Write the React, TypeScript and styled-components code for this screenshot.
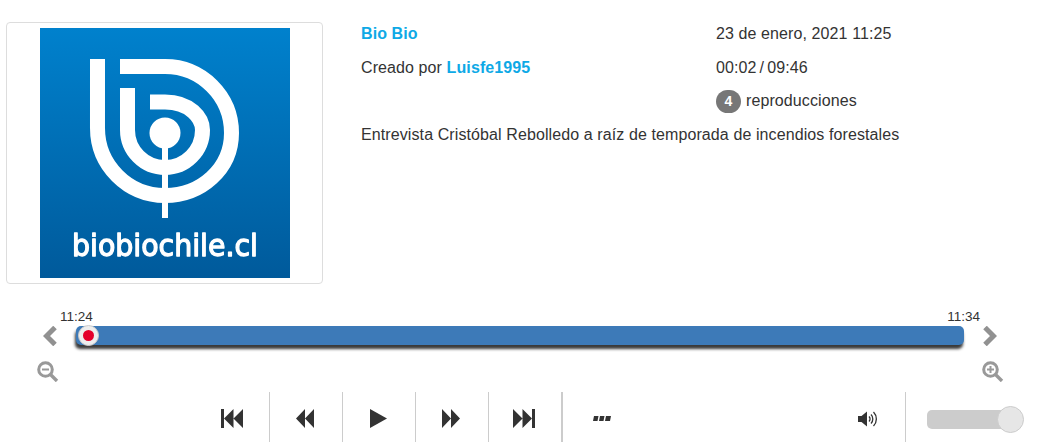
import styled, { createGlobalStyle } from "styled-components";

const GlobalStyle = createGlobalStyle`
  html, body {
    margin: 0;
    height: 442px;
    overflow: hidden;
    background: #fff;
    color: #333;
    font-family: "Liberation Sans", Arial, sans-serif;
    font-size: 16px;
    letter-spacing: 0.1px;
  }
`;

const Page = styled.div`
  width: 1041px;
  height: 442px;
  overflow: hidden;
`;

const TopRow = styled.section`
  display: flex;
  padding: 17px 0 0 6px;
  height: 267px;
`;

const Thumbnail = styled.div`
  box-sizing: border-box;
  flex: none;
  width: 317px;
  height: 262px;
  margin-top: 5px;
  padding: 5px;
  display: flex;
  justify-content: center;
  border: 1px solid #ddd;
  border-radius: 4px;
`;

const Info = styled.div`
  margin-left: 38px;
  width: 640px;
  display: grid;
  grid-template-columns: 355px 1fr;
  grid-auto-rows: 33.7px;
  align-items: center;
  align-content: start;
  line-height: 20px;
`;

const Link = styled.a`
  color: #0ea9e6;
  font-weight: 700;
  text-decoration: none;
`;

const Duration = styled.div`
  word-spacing: -1.5px;
`;

const Description = styled.div`
  grid-column: 1 / 3;
`;

const Badge = styled.span`
  display: inline-block;
  box-sizing: border-box;
  width: 25px;
  height: 23px;
  margin-right: 5px;
  border-radius: 12px;
  background: #777;
  color: #fff;
  font-size: 14px;
  font-weight: 700;
  line-height: 23px;
  text-align: center;
  vertical-align: middle;
`;

const Timeline = styled.section`
  margin-top: 25px;
  height: 83px;
`;

const TimeLabels = styled.div`
  display: flex;
  justify-content: space-between;
  padding: 0 61px 0 60px;
  height: 15px;
  font-size: 13.5px;
  line-height: 15px;
  letter-spacing: 0;
  color: #333;
`;

const BarRow = styled.div`
  display: flex;
  align-items: center;
  margin-top: 1px;
  padding-left: 43px;
  svg {
    flex: none;
    margin-top: 1px;
  }
`;

const Bar = styled.div`
  position: relative;
  flex: none;
  width: 888px;
  height: 19px;
  margin: 0 18px;
  border-radius: 5px;
  background: #3d7ab8;
  box-shadow: -1px 4px 3px #3a3a3a;
`;

const Handle = styled.div`
  position: absolute;
  left: 2px;
  top: -1px;
  box-sizing: border-box;
  width: 21px;
  height: 21px;
  display: flex;
  align-items: center;
  justify-content: center;
  border: 1px solid #ccc;
  border-radius: 50%;
  background: #eee;
  &::after {
    content: "";
    width: 11px;
    height: 11px;
    border-radius: 50%;
    background: #e4002b;
  }
`;

const ZoomRow = styled.div`
  display: flex;
  justify-content: space-between;
  padding: 15px 37px 0 37px;
`;

const Controls = styled.section`
  display: flex;
  align-items: stretch;
  height: 50px;
  padding-left: 197px;
`;

const ControlButton = styled.button<{ $width?: number; $divider?: number }>`
  box-sizing: content-box;
  flex: none;
  width: ${(p) => p.$width ?? 70}px;
  padding: 3px 2px 0 0;
  display: flex;
  align-items: center;
  justify-content: center;
  background: none;
  border: none;
  border-right: ${(p) => p.$divider ?? 1}px solid #ccc;
`;

const Spacer = styled.div`
  flex: none;
  width: 190px;
`;

const VolumeSlider = styled.div`
  position: relative;
  flex: none;
  align-self: center;
  width: 84px;
  height: 19px;
  margin: 4px 0 0 21px;
  border-radius: 5px;
  background: #ccc;
`;

const VolumeThumb = styled.div`
  position: absolute;
  right: -13px;
  top: -4px;
  box-sizing: border-box;
  width: 27px;
  height: 27px;
  border: 1px solid #ccc;
  border-radius: 50%;
  background: #e6e6e6;
`;

const Logo = () => (
  <svg width="250" height="250" viewBox="0 0 250 250">
    <defs>
      <linearGradient id="logoBg" x1="0" y1="0" x2="0" y2="1">
        <stop offset="0" stopColor="#0081cd" />
        <stop offset="1" stopColor="#005a9b" />
      </linearGradient>
      <filter id="soft">
        <feGaussianBlur stdDeviation="0.4" />
      </filter>
    </defs>
    <rect width="250" height="250" fill="url(#logoBg)" />
    <g fill="none" stroke="#fff" strokeWidth="15" filter="url(#soft)">
      <path d="M80 38.5H125A66.5 66.5 0 0 1 191.5 105C191.5 141 161 167.5 125 167.5A67.5 67.5 0 0 1 57.5 100V31" />
      <path d="M80 67.500H87.500V102A37.500 37.500 0 0 0 162.500 102C162.500 90 150 74 125 74H110" />
    </g>
    <g fill="#fff" filter="url(#soft)">
      <rect x="122" y="110" width="6" height="80" />
      <circle cx="125" cy="105" r="15.500" />
      <text
        x="32"
        y="228"
        fontFamily="'DejaVu Sans', sans-serif"
        fontSize="30"
        stroke="#fff"
        strokeWidth="1.300"
        strokeLinejoin="round"
        letterSpacing="0"
        textLength="186"
        lengthAdjust="spacingAndGlyphs"
      >
        biobiochile.cl
      </text>
    </g>
  </svg>
);

const Chevron = ({ flip }: { flip?: boolean }) => (
  <svg width="15" height="20" viewBox="0 0 15 20" style={flip ? { transform: "scaleX(-1)" } : undefined}>
    <path d="M12 1.500L3.500 10l8.500 8.500" fill="none" stroke="#919191" strokeWidth="5" />
  </svg>
);

const Magnifier = ({ plus }: { plus?: boolean }) => (
  <svg width="22" height="21" viewBox="0 0 22 21">
    <circle cx="8.500" cy="8.500" r="6.800" fill="none" stroke="#999" strokeWidth="3" />
    <path d="M13.500 13.500L20 20" stroke="#999" strokeWidth="3.400" />
    <path d="M5 8.500h7" stroke="#999" strokeWidth="2" />
    {plus && <path d="M8.500 5v7" stroke="#999" strokeWidth="2" />}
  </svg>
);

const Glyph = ({ width, height, d }: { width: number; height: number; d: string }) => (
  <svg width={width} height={height} viewBox={`0 0 ${width} ${height}`}>
    <path d={d} fill="#333" />
  </svg>
);

const VolumeIcon = () => (
  <svg width="20" height="18" viewBox="0 0 20 18">
    <path d="M0 6h3.500L9 1.500v15L3.500 12H0z" fill="#333" />
    <g fill="none" stroke="#333" strokeWidth="1.300">
      <path d="M11 6.500a3.500 3.500 0 0 1 0 5" />
      <path d="M13 4.500a6.500 6.500 0 0 1 0 9" />
      <path d="M15.500 2a10 10 0 0 1 0 14" />
    </g>
  </svg>
);

export default function App(): JSX.Element {
  return (
    <Page>
      <GlobalStyle />
      <TopRow>
        <Thumbnail>
          <Logo />
        </Thumbnail>
        <Info>
          <div>
            <Link>Bio Bio</Link>
          </div>
          <div>23 de enero, 2021 11:25</div>
          <div>
            Creado por <Link>Luisfe1995</Link>
          </div>
          <Duration>00:02 / 09:46</Duration>
          <div />
          <div>
            <Badge>4</Badge>reproducciones
          </div>
          <Description>
            Entrevista Cristóbal Rebolledo a raíz de temporada de incendios forestales
          </Description>
        </Info>
      </TopRow>

      <Timeline>
        <TimeLabels>
          <span>11:24</span>
          <span>11:34</span>
        </TimeLabels>
        <BarRow>
          <Chevron />
          <Bar>
            <Handle />
          </Bar>
          <Chevron flip />
        </BarRow>
        <ZoomRow>
          <Magnifier />
          <Magnifier plus />
        </ZoomRow>
      </Timeline>

      <Controls>
        <ControlButton>
          <Glyph width={22} height={19} d="M0 0h3v19H0zM3 9.500L12.500 0v19zM12.500 9.500L22 0v19z" />
        </ControlButton>
        <ControlButton>
          <Glyph width={18} height={19} d="M0 9.500L9 0v19zM9 9.500L18 0v19z" />
        </ControlButton>
        <ControlButton>
          <Glyph width={17} height={19} d="M0 0l17 9.500L0 19z" />
        </ControlButton>
        <ControlButton>
          <Glyph width={18} height={19} d="M0 0l9 9.500L0 19zM9 0l9 9.500L9 19z" />
        </ControlButton>
        <ControlButton $divider={2}>
          <Glyph width={22} height={19} d="M0 0l9.500 9.500L0 19zM9.500 0L19 9.500 9.500 19zM19 0h3v19h-3z" />
        </ControlButton>
        <ControlButton as="div" $width={78} $divider={0}>
          <Glyph width={18} height={5} d="M1 0h4.500L4.500 5H0zM7 0h4.500l-1 5H6zM13 0h5l-1 5h-5z" />
        </ControlButton>
        <Spacer />
        <ControlButton>
          <VolumeIcon />
        </ControlButton>
        <VolumeSlider>
          <VolumeThumb />
        </VolumeSlider>
      </Controls>
    </Page>
  );
}
